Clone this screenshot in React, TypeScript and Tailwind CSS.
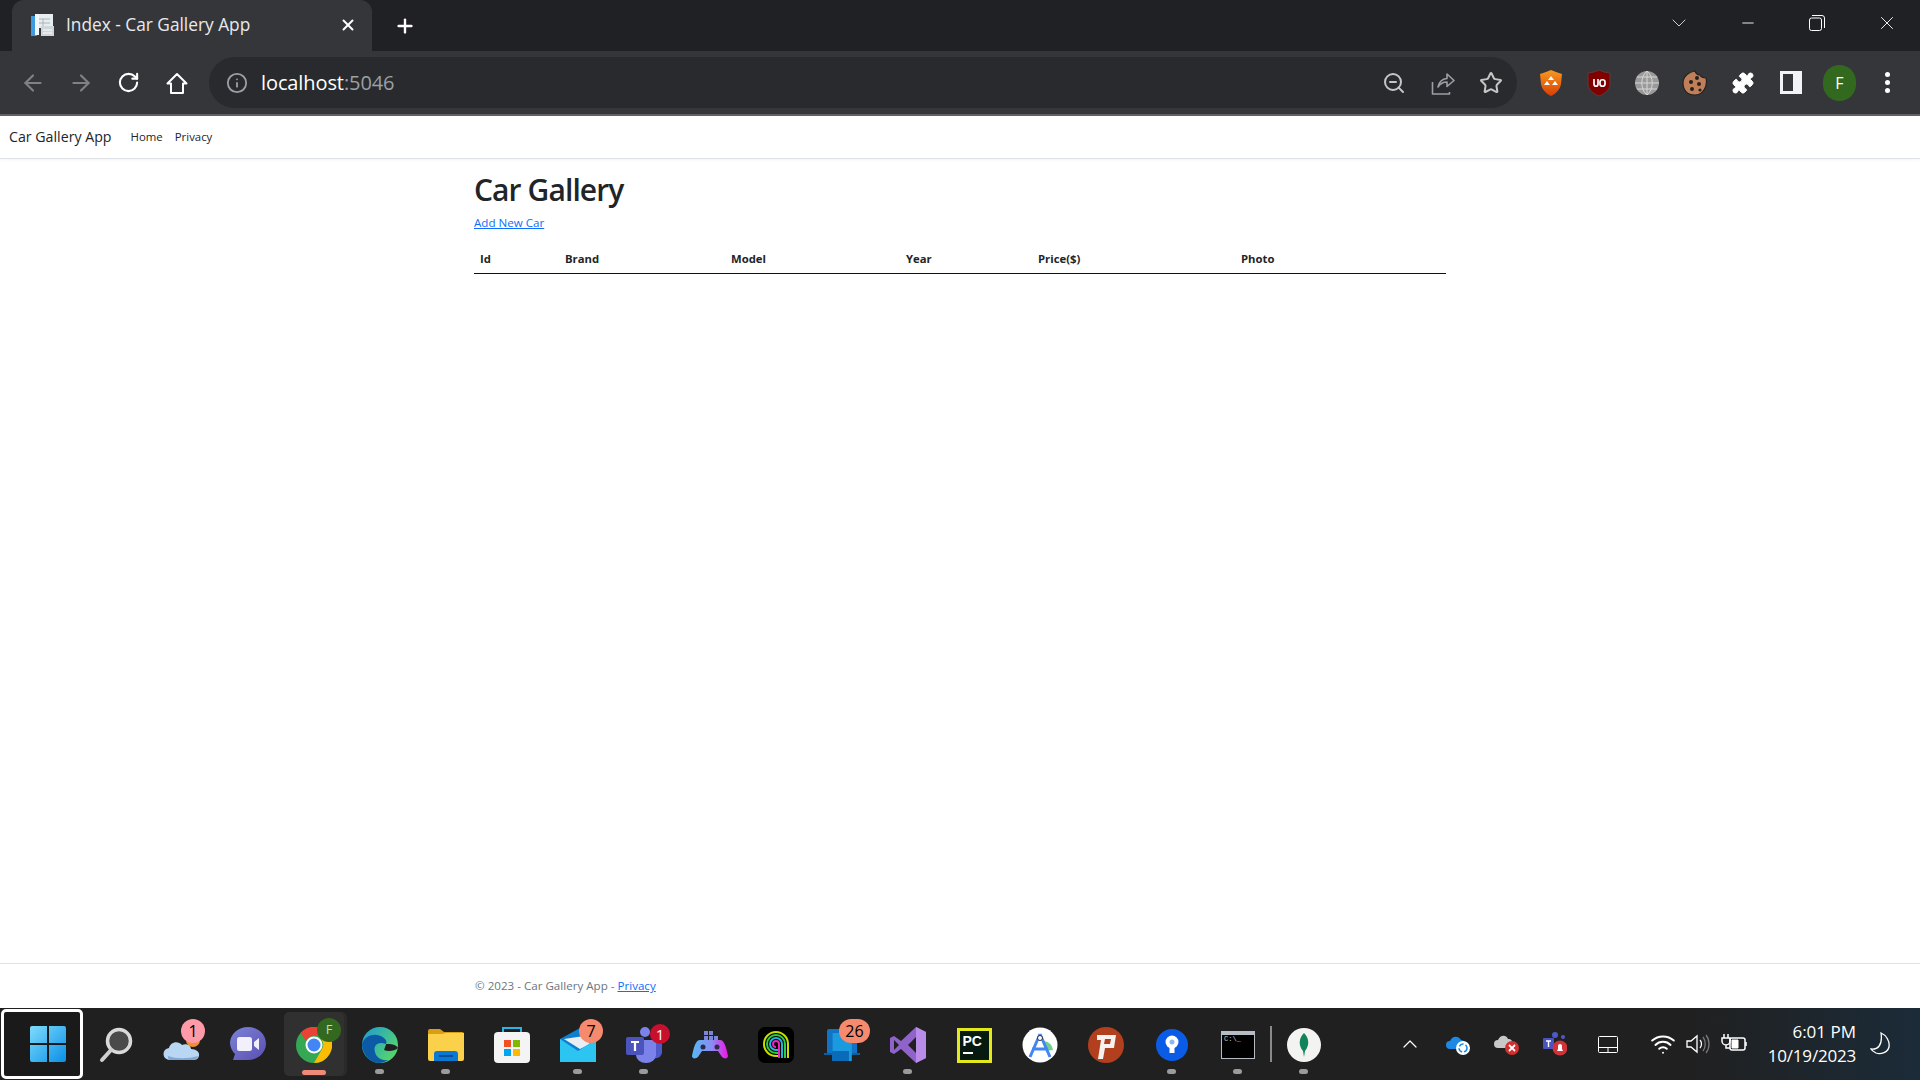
import type { ReactNode } from "react";
import { ArrowLeft, ArrowRight, Info, RotateCw, ZoomOut, Star, X, Plus, ChevronDown, ChevronUp, Minus, Puzzle, Wifi } from "lucide-react";

const columns = [
  { label: "Id", width: "w-[85px]" },
  { label: "Brand", width: "w-[166px]" },
  { label: "Model", width: "w-[175px]" },
  { label: "Year", width: "w-[132px]" },
  { label: "Price($)", width: "w-[203px]" },
  { label: "Photo", width: "flex-1" },
];

const Badge = ({ text, color, className }: { text: string; color: string; className: string }) => (
  <span className={`absolute flex h-[24px] items-center justify-center rounded-full text-[16px] text-black ${color} ${className}`}>
    {text}
  </span>
);

const Slot = ({ children, dot, badge }: { children: ReactNode; dot?: boolean; badge?: ReactNode }) => (
  <div className="relative flex h-[72px] w-[66px] shrink-0 items-center justify-center pt-[2px]">
    {children}
    {badge}
    {dot && <span className="absolute bottom-[6px] left-[28px] h-[5px] w-[9px] rounded-full bg-[#9b9b9b]" />}
  </div>
);

const TabFavicon = () => (
  <svg width="24" height="24" viewBox="0 0 24 24">
    <path d="M1 3h6v20H1z" fill="#3d9be0" />
    <path d="M6 1h17v14H6z" fill="#e8edf2" />
    <path d="M9 6h11M9 10h11M13 6v10" stroke="#aab4bd" fill="none" />
    <path d="M5 1h4v21H5z" fill="#f4f7fa" />
    <path d="M11 13h13v10H11z" fill="#cfd6dc" />
    <path d="M13 17h9M13 20h9" stroke="#fff" />
  </svg>
);

const HomeOutline = () => (
  <svg width="24" height="24" viewBox="0 0 24 24" fill="none" stroke="#fff" strokeWidth="2" strokeLinejoin="round">
    <path d="M12 3L2.500 12.500H6V22h12v-9.500h3.500z" />
  </svg>
);

const ShareBox = () => (
  <svg width="24" height="24" viewBox="0 0 24 24" fill="none" stroke="#9aa0a6" strokeWidth="1.6" strokeLinejoin="round">
    <path d="M1.500 11v12h17v-2M1.500 23" />
    <path d="M7 16c1-5 4-8 9-8.500V3l7 6.500-7 6V11c-4 0-7 2-9 5z" />
  </svg>
);

const BraveIcon = () => (
  <svg width="24" height="28" viewBox="0 0 24 28">
    <defs>
      <linearGradient id="brave" x1="0" y1="0" x2="0" y2="1">
        <stop offset="0" stopColor="#f79a1f" />
        <stop offset="1" stopColor="#d93d05" />
      </linearGradient>
    </defs>
    <path d="M12 1l5 2 6 2-1 10c-1 6-6 10-10 12C8 25 3 21 2 15L1 5l6-2z" fill="url(#brave)" />
    <path d="M12 7l3 4h-6zM8 12l3 4H5zM16 12l3 4h-6z" fill="#fff" />
  </svg>
);

const UblockIcon = () => (
  <svg width="24" height="28" viewBox="0 0 24 28">
    <path d="M12 1l5 2 6 1v11c0 6-6 10-11 12C7 25 1 21 1 15V4l6-1z" fill="#800000" stroke="#5c3a3a" />
    <path d="M7 10v5c0 3 4 3 4 0v-5M13 13c0-3 5-3 5 0v2c0 3-5 3-5 0z" fill="none" stroke="#fff" strokeWidth="1.7" />
  </svg>
);

const GlobeIcon = () => (
  <svg width="26" height="26" viewBox="0 0 26 26">
    <circle cx="13" cy="13" r="12" fill="#9a9a9a" />
    <path d="M1 13h24M3 7h20M3 19h20M13 1v24M13 1c-7 6-7 18 0 24M13 1c7 6 7 18 0 24" fill="none" stroke="#d6d6d6" />
  </svg>
);

const CookieIcon = () => (
  <svg width="26" height="28" viewBox="0 0 26 28">
    <path d="M13 2c1 3 3 4 5 4 1 2 3 3 6 3 2 8-3 17-11 17S1 21 1 14 7 3 13 2z" fill="#c17f59" stroke="#222" strokeWidth="1.2" />
    <circle cx="15" cy="9" r="2" fill="#222" />
    <circle cx="9" cy="13" r="2" fill="#222" />
    <circle cx="17" cy="15" r="2" fill="#222" />
    <circle cx="10" cy="20" r="2" fill="#222" />
    <circle cx="18" cy="21" r="1.6" fill="#222" />
  </svg>
);

const WinLogo = () => (
  <svg width="36" height="36" viewBox="0 0 36 36">
    <defs>
      <linearGradient id="win" x1="0" y1="0" x2="1" y2="1">
        <stop offset="0" stopColor="#7fdcfb" />
        <stop offset="1" stopColor="#0a8fe8" />
      </linearGradient>
    </defs>
    <path d="M0 2a2 2 0 012-2h15v17H0zM19 0h15a2 2 0 012 2v15H19zM0 19h17v17H2a2 2 0 01-2-2zM19 19h17v15a2 2 0 01-2 2H19z" fill="url(#win)" />
  </svg>
);

const SearchGlass = () => (
  <svg width="34" height="36" viewBox="0 0 34 36">
    <circle cx="20" cy="14" r="11.500" fill="#4a4a4a" stroke="#d9d9d9" strokeWidth="3.500" />
    <path d="M12 23L3 33" stroke="#cfcfcf" strokeWidth="4" strokeLinecap="round" />
  </svg>
);

const WeatherIcon = () => (
  <svg width="38" height="34" viewBox="0 0 38 34">
    <circle cx="30" cy="12" r="7" fill="#f09030" />
    <path d="M7 32a6 6 0 01-1-12c1-6 9-8 13-3 5-2 9 1 9 4 5 0 9 3 8 7-1 3-3 4-6 4z" fill="#b9d6f2" />
    <path d="M5 28c8 3 20 3 30 0-1 3-3 4-6 4H7c-1 0-2-1-2-4z" fill="#7fa8d6" />
  </svg>
);

const MeetIcon = () => (
  <svg width="36" height="36" viewBox="0 0 36 36">
    <defs>
      <linearGradient id="meet" x1="0" y1="0" x2="1" y2="1">
        <stop offset="0" stopColor="#7b83d9" />
        <stop offset="1" stopColor="#5b4fb0" />
      </linearGradient>
    </defs>
    <path d="M18 0a18 16.500 0 110 33H3l2-6A17 17 0 010 16 18 16 0 0118 0z" fill="url(#meet)" />
    <rect x="7" y="10" width="15" height="14" rx="2.500" fill="#f2f0fb" />
    <path d="M24 15l5-4v12l-5-4z" fill="#f2f0fb" />
  </svg>
);

const ChromeIcon = () => (
  <svg width="36" height="36" viewBox="0 0 36 36">
    <circle cx="18" cy="18" r="18" fill="#34a853" />
    <path d="M18 0a18 18 0 0115.600 9H18a9 9 0 00-8 5L4.500 6A18 18 0 0118 0z" fill="#ea4335" />
    <path d="M33.600 9A18 18 0 0118 36l7.800-13.500A9 9 0 0026 13z" fill="#fbbc04" />
    <circle cx="18" cy="18" r="8.500" fill="#fff" />
    <circle cx="18" cy="18" r="6.500" fill="#4285f4" />
  </svg>
);

const EdgeIcon = () => (
  <svg width="36" height="36" viewBox="0 0 36 36">
    <defs>
      <linearGradient id="edge" x1="0" y1="0" x2="1" y2="0.7">
        <stop offset="0" stopColor="#1a9bd7" />
        <stop offset="1" stopColor="#58d66a" />
      </linearGradient>
    </defs>
    <circle cx="18" cy="18" r="18" fill="url(#edge)" />
    <path d="M0 18C1 11 8 7 15 8c6 1 11 5 9 9-8-3-13 1-11 8 1 5 6 9 13 8-3 2-6 3-9 3C8 36 1 28 0 18z" fill="#0c5aa6" />
    <path d="M36 21c-3 3-10 4-14 2 1-3 2-5 2-6 4 0 10 0 12 4z" fill="#202020" />
  </svg>
);

const FolderIcon = () => (
  <svg width="36" height="32" viewBox="0 0 36 32">
    <path d="M0 2a2 2 0 012-2h10l4 3h18a2 2 0 012 2v3H0z" fill="#d99e12" />
    <path d="M0 5h14l4-1h18v26a2 2 0 01-2 2H2a2 2 0 01-2-2z" fill="#fbd14b" />
    <path d="M6 32v-7a3 3 0 013-3h18a3 3 0 013 3v7z" fill="#0c78d6" />
    <path d="M11 27h14" stroke="#0a4f94" strokeWidth="2" />
  </svg>
);

const StoreIcon = () => (
  <svg width="36" height="36" viewBox="0 0 36 36">
    <path d="M9 6V1h18v5" fill="none" stroke="#2cb3ea" strokeWidth="2" />
    <rect y="5" width="36" height="31" rx="4" fill="#f4f4f4" />
    <path d="M10 13h7v7h-7z" fill="#f25022" />
    <path d="M19 13h7v7h-7z" fill="#7fba00" />
    <path d="M10 22h7v7h-7z" fill="#00a4ef" />
    <path d="M19 22h7v7h-7z" fill="#ffb900" />
  </svg>
);

const MailIcon = () => (
  <svg width="36" height="34" viewBox="0 0 36 34">
    <path d="M0 11L20 0l16 11v23H0z" fill="#0c7fd0" />
    <path d="M4 11l20-3 6 8-10 5z" fill="#e8eef2" />
    <path d="M0 11l18 12 18-12v23H0z" fill="#2cc4f0" />
  </svg>
);

const TeamsIcon = () => (
  <svg width="36" height="36" viewBox="0 0 36 36">
    <circle cx="19" cy="5" r="5" fill="#7b83eb" />
    <circle cx="31" cy="9" r="4" fill="#5059c9" />
    <path d="M24 14h12v12a7 7 0 01-12 3z" fill="#5059c9" />
    <path d="M10 13h20v15a10 8 0 01-20 0z" fill="#7b83eb" />
    <rect y="10" width="18" height="18" rx="2" fill="#4b53bc" />
    <path d="M5 15h8M9 15v9" stroke="#fff" strokeWidth="2.200" />
  </svg>
);

const GameIcon = () => (
  <svg width="36" height="28" viewBox="0 0 36 28">
    <defs>
      <linearGradient id="pad" x1="0" y1="0" x2="1" y2="0">
        <stop offset="0" stopColor="#56b8f5" />
        <stop offset="0.55" stopColor="#8a8cf2" />
        <stop offset="1" stopColor="#f214e8" />
      </linearGradient>
    </defs>
    <path d="M8 9h20c4 0 6 6 8 16 0 3-4 3-6 1l-4-6H10l-4 6c-2 2-6 2-6-1C2 15 4 9 8 9z" fill="url(#pad)" />
    <path d="M12 0h4v4h-4zM17 0h4v4h-4zM12 5h4v4h-4zM17 5h4v4h-4zM22 5h4v4h-4z" fill="#7a86d8" />
    <circle cx="11" cy="16" r="2.500" fill="#2b2b4a" />
    <circle cx="25" cy="16" r="2.500" fill="#2b2b4a" />
  </svg>
);

const AnacondaIcon = () => (
  <svg width="36" height="36" viewBox="0 0 36 36">
    <rect width="36" height="36" rx="7" fill="#000" />
    <path d="M30 31V17a12 12 0 10-12 12h4" fill="none" stroke="#c8e000" strokeWidth="2" />
    <path d="M27 31V17a9 9 0 10-9 9h4" fill="none" stroke="#2ecc40" strokeWidth="2" />
    <path d="M24 31V17a6 6 0 10-6 6h2" fill="none" stroke="#1cb5e0" strokeWidth="2" />
    <path d="M21 31V17a3 3 0 10-3 3" fill="none" stroke="#f020c0" strokeWidth="2" />
  </svg>
);

const PhoneLinkIcon = () => (
  <svg width="36" height="32" viewBox="0 0 36 32">
    <path d="M3 2a2 2 0 012-2h26a2 2 0 012 2v22H3z" fill="#1173c4" />
    <path d="M0 24h36v2H0z" fill="#0d5ea3" />
    <path d="M7 4h24v28H7z" fill="#1a9be0" transform="translate(3 0) scale(.8 1)" />
    <path d="M8 22h17v10H8z" fill="#0a6cb8" />
  </svg>
);

const VisualStudioIcon = () => (
  <svg width="36" height="36" viewBox="0 0 36 36">
    <path d="M26 0l10 5v26l-10 5-15-14-7 5-4-2V11l4-2 7 5zM26 10l-8 8 8 8z" fill="#8f63c9" fillRule="evenodd" />
    <path d="M26 0l10 5v26l-10 5z" fill="#b88ce8" />
    <path d="M4 13v10l5-5z" fill="#202020" />
  </svg>
);

const PyCharmIcon = () => (
  <div className="flex h-[35px] w-[35px] flex-col border-[3px] border-[#e3e91a] bg-[#071a10] pl-[3px] pt-[2px] font-['Liberation_Sans',sans-serif] text-[14px] font-bold leading-[16px] text-white">
    PC
    <span className="mt-[3px] h-[2px] w-[10px] bg-white" />
  </div>
);

const AndroidStudioIcon = () => (
  <svg width="36" height="36" viewBox="0 0 36 36">
    <circle cx="18" cy="18" r="17.500" fill="#fff" />
    <path d="M20 14c6 0 10 3 11 9l-7 1z" fill="#6fd08c" />
    <path d="M18 7L8 30M18 7l10 23M10 22h16" stroke="#4285f4" strokeWidth="3" fill="none" />
    <circle cx="18" cy="11" r="2.500" fill="#fff" stroke="#333" />
  </svg>
);

const PsiphonIcon = () => (
  <svg width="36" height="36" viewBox="0 0 36 36">
    <circle cx="18" cy="18" r="18" fill="#b23f1e" />
    <path d="M9 8h19l-2 13H17l-2 11h-5l3-19H9z" fill="#f5f2f0" />
    <path d="M17 12h6l-1 5h-6z" fill="#b23f1e" />
  </svg>
);

const BlueKeyIcon = () => (
  <svg width="32" height="32" viewBox="0 0 32 32">
    <circle cx="16" cy="16" r="16" fill="#0a5ce6" />
    <circle cx="16" cy="13" r="6.500" fill="#fff" />
    <path d="M13.500 16h5v8h-5z" fill="#fff" />
    <circle cx="16" cy="13" r="2.500" fill="#8ab8f5" />
  </svg>
);

const ConsoleIcon = () => (
  <div className="h-[28px] w-[34px] border border-[#b5bcc4] bg-black">
    <div className="h-[3px] bg-[#b5bcc4]" />
    <div className="px-[2px] font-['Liberation_Mono',monospace] text-[7px] leading-[9px] text-[#cccccc]">C:\_</div>
  </div>
);

const MongoIcon = () => (
  <svg width="34" height="34" viewBox="0 0 34 34">
    <circle cx="17" cy="17" r="17" fill="#f3f4f1" />
    <path d="M17 5c5 5 6 12 1 18l-1 6-1-6C11 17 12 10 17 5z" fill="#13835a" />
  </svg>
);

const TrayTeams = () => (
  <svg width="24" height="24" viewBox="0 0 24 24">
    <circle cx="12" cy="3" r="3" fill="#5059c9" />
    <circle cx="20" cy="5" r="2" fill="#5059c9" />
    <rect y="6" width="11" height="11" rx="1" fill="#4b53bc" />
    <path d="M3 9h5M5.500 9v6" stroke="#fff" strokeWidth="1.400" />
    <circle cx="17" cy="16" r="7.500" fill="#d13438" />
    <path d="M14 19h6l-1-2v-3a2 2 0 00-4 0v3z" fill="#fff" />
  </svg>
);

const App = () => {
  return (
    <div className="flex h-[1080px] w-[1920px] flex-col overflow-hidden bg-white font-['Open_Sans',sans-serif] text-[#212529]">
      {/* tab strip */}
      <div className="flex h-[51px] shrink-0 items-center bg-[#202124] pl-[12px]">
        <div className="flex h-[51px] w-[360px] items-center rounded-t-[12px] bg-[#35363a] pb-[1px] pl-[18px] text-white">
          <TabFavicon />
          <span className="ml-[12px] text-[17.3px] text-[#e8eaed]">Index - Car Gallery App</span>
          <X className="ml-auto mr-[15px] h-[18px] w-[18px] text-white" strokeWidth={2.6} />
        </div>
        <Plus className="ml-[22px] h-[22px] w-[22px] text-white" strokeWidth={2.6} />
        <ChevronDown className="mb-[6px] ml-[1251px] h-[24px] w-[24px] text-[#cfd0d2]" strokeWidth={1} />
        <Minus className="mb-[6px] ml-[48px] h-[18px] w-[18px] text-white" strokeWidth={1.2} />
        <svg className="mb-[6px] ml-[52px]" width="16" height="16" viewBox="0 0 16 16" fill="none" stroke="#fff" strokeWidth="1">
          <rect x="0.5" y="3" width="12" height="12.500" rx="2" />
          <path d="M3 .5h10a2.500 2.500 0 012.500 2.500v10" />
        </svg>
        <X className="mb-[6px] ml-[51px] h-[22px] w-[22px] text-white" strokeWidth={1} />
      </div>

      {/* toolbar */}
      <div className="flex h-[65px] shrink-0 items-center border-b-2 border-[#606164] bg-[#35363a]">
        <ArrowLeft className="ml-[20px] h-[26px] w-[26px] text-[#808184]" strokeWidth={2} />
        <ArrowRight className="ml-[22px] h-[26px] w-[26px] text-[#808184]" strokeWidth={2} />
        <RotateCw className="ml-[23px] h-[23px] w-[23px] text-white" strokeWidth={2.2} />
        <div className="ml-[25px]"><HomeOutline /></div>
        <div className="ml-[20px] flex h-[51px] w-[1308px] items-center rounded-full bg-[#292a2d] pl-[17px]">
          <Info className="h-[22px] w-[22px] text-[#9aa0a6]" strokeWidth={2} />
          <span className="ml-[13px] text-[20px] tracking-[-0.1px] text-white">localhost<span className="text-[#9aa0a6]">:5046</span></span>
          <ZoomOut className="ml-auto h-[24px] w-[24px] text-[#c4c7c5]" strokeWidth={2} />
          <div className="ml-[25px]"><ShareBox /></div>
          <Star className="ml-[24px] mr-[14px] h-[24px] w-[24px] text-[#c4c7c5]" strokeWidth={2} />
        </div>
        <div className="ml-[22px]"><BraveIcon /></div>
        <div className="ml-[24px]"><UblockIcon /></div>
        <div className="ml-[23px]"><GlobeIcon /></div>
        <div className="ml-[22px]"><CookieIcon /></div>
        <Puzzle className="ml-[23px] h-[24px] w-[24px] fill-white text-white" strokeWidth={1} />
        <div className="ml-[25px] flex h-[23px] w-[22px] justify-end bg-[#f1f3f4] py-[3px] pl-[3px] pr-[9px]">
          <div className="h-full w-[10px] bg-[#35363a]" />
        </div>
        <div className="ml-[21px] flex h-[36px] w-[33px] items-center justify-center rounded-full bg-[#33691e] text-[16px] text-white">F</div>
        <div className="ml-[29px] flex flex-col gap-[3px]">
          <span className="h-[5px] w-[5px] rounded-full bg-white" />
          <span className="h-[5px] w-[5px] rounded-full bg-white" />
          <span className="h-[5px] w-[5px] rounded-full bg-white" />
        </div>
      </div>

      {/* navbar */}
      <nav className="flex h-[43px] shrink-0 items-center border-b border-[#dee2e6] pl-[9px] shadow-[0_1px_3px_rgba(0,0,0,0.05)]">
        <span className="text-[14.2px]">Car Gallery App</span>
        <span className="ml-[19px] text-[11.4px]">Home</span>
        <span className="ml-[12px] text-[11.4px]">Privacy</span>
      </nav>

      {/* main */}
      <main className="ml-[474px] w-[972px] flex-1">
        <h1 className="mt-[12px] text-[30px] font-semibold leading-[37px] tracking-[-0.9px]">Car Gallery</h1>
        <a className="mt-[7px] block text-[11.6px] leading-[16px] text-[#0d6efd] underline">Add New Car</a>
        <div className="mt-[14px] flex h-[29px] items-center border-b border-[#111111] pl-[6px] text-[11.3px] font-bold">
          {columns.map((col) => (
            <span key={col.label} className={col.width}>{col.label}</span>
          ))}
        </div>
      </main>

      {/* footer */}
      <footer className="flex h-[45px] shrink-0 items-center border-t border-[#dee2e6] pl-[475px] text-[11.6px] text-[#6c757d]">
        © 2023 - Car Gallery App -&nbsp;<a className="text-[#0d6efd] underline">Privacy</a>
      </footer>

      {/* taskbar */}
      <div className="flex h-[72px] shrink-0 items-center bg-[linear-gradient(90deg,#202020_0%,#202020_88%,#1b2b38_100%)] text-white">
        <div className="ml-[1px] flex h-[70px] w-[82px] items-center justify-center rounded-[5px] border-[3px] border-white bg-[#1a1a1a] pl-[12px]">
          <WinLogo />
        </div>
        <Slot><SearchGlass /></Slot>
        <Slot badge={<Badge text="1" color="bg-[#ff9aa8]" className="left-[32px] top-[11px] w-[24px]" />}><WeatherIcon /></Slot>
        <Slot><MeetIcon /></Slot>
        <div className="relative mx-[3px] flex h-[64px] w-[60px] shrink-0 items-center justify-center rounded-[5px] bg-[#303030] pt-[2px] shadow-[3px_0_0_#2a2a2a]">
          <ChromeIcon />
          <span className="absolute right-[3px] top-[6px] flex h-[24px] w-[24px] items-center justify-center rounded-full bg-[#33691e] text-[13px] text-[#d0d0d0]">F</span>
          <span className="absolute bottom-[1px] left-[18px] h-[5px] w-[24px] rounded-full bg-[#f08a78]" />
        </div>
        <Slot dot><EdgeIcon /></Slot>
        <Slot dot><FolderIcon /></Slot>
        <Slot><StoreIcon /></Slot>
        <Slot dot badge={<Badge text="7" color="bg-[#f58a6e]" className="left-[34px] top-[11px] w-[24px]" />}><MailIcon /></Slot>
        <Slot dot badge={<span className="absolute left-[39px] top-[16px] flex h-[20px] w-[20px] items-center justify-center rounded-full bg-[#c8102e] text-[15px] text-white">1</span>}><TeamsIcon /></Slot>
        <Slot><GameIcon /></Slot>
        <Slot><AnacondaIcon /></Slot>
        <Slot badge={<Badge text="26" color="bg-[#f58a6e]" className="left-[30px] top-[11px] w-[31px]" />}><PhoneLinkIcon /></Slot>
        <Slot dot><VisualStudioIcon /></Slot>
        <Slot><PyCharmIcon /></Slot>
        <Slot><AndroidStudioIcon /></Slot>
        <Slot><PsiphonIcon /></Slot>
        <Slot dot><BlueKeyIcon /></Slot>
        <Slot dot><ConsoleIcon /></Slot>
        <span className="-mx-[1px] h-[36px] w-[2px] shrink-0 bg-[#8a8a8a]" />
        <Slot dot><MongoIcon /></Slot>

        {/* tray */}
        <ChevronUp className="ml-[61px] h-[24px] w-[24px] text-white" strokeWidth={1.2} />
        <svg className="ml-[23px]" width="26" height="24" viewBox="0 0 26 24">
          <path d="M5 17a4 4 0 010-8c2-5 8-6 11-1 2 0 4 1 4 4v5z" fill="#1e88e5" />
          <circle cx="18" cy="16" r="7" fill="#fff" />
          <circle cx="18" cy="16" r="4" fill="none" stroke="#1e88e5" strokeWidth="1.5" strokeDasharray="5 2" />
        </svg>
        <svg className="ml-[23px]" width="26" height="24" viewBox="0 0 26 24">
          <path d="M4 16a4 4 0 010-8c2-5 8-6 10-1 3 0 5 2 5 5l-3 4z" fill="#c8c8c8" />
          <circle cx="18" cy="16" r="7" fill="#d32f2f" />
          <path d="M15 13l6 6M21 13l-6 6" stroke="#fff" strokeWidth="1.8" />
        </svg>
        <div className="ml-[23px]"><TrayTeams /></div>
        <svg className="ml-[31px]" width="20" height="17" viewBox="0 0 20 17" fill="none" stroke="#fff" strokeWidth="1">
          <rect x="0.5" y="0.5" width="19" height="16" rx="1" />
          <path d="M.5 11.500h19M10 11.500v5" />
        </svg>
        <Wifi className="ml-[32px] h-[26px] w-[26px] text-white" strokeWidth={1.8} />
        <svg className="ml-[9px]" width="26" height="24" viewBox="0 0 26 24" fill="none" stroke="#fff" strokeWidth="1.3">
          <path d="M2 9h4l6-5v16l-6-5H2z" />
          <path d="M15 8c2 2 2 6 0 8" />
          <path d="M18 5c3 4 3 10 0 14M21 3c4 5 4 13 0 18" stroke="#777" />
        </svg>
        <svg className="ml-[10px]" width="26" height="22" viewBox="0 0 26 22" fill="none" stroke="#fff">
          <path d="M3 1v4M7 1v4M1 5h8v3a4 4 0 01-8 0zM5 12v3h4" strokeWidth="1.5" />
          <rect x="9" y="5" width="15" height="12" rx="2" strokeWidth="1.5" />
          <path d="M11 7h6v8h-6z" fill="#fff" />
          <path d="M25 9v4" strokeWidth="1.5" />
        </svg>
        <div className="ml-[9px] w-[100px] text-right text-[17px] leading-[24px] text-white">
          <div>6:01 PM</div>
          <div className="tracking-[-0.2px]">10/19/2023</div>
        </div>
        <svg className="ml-[14px]" width="22" height="24" viewBox="0 0 22 24" fill="none" stroke="#fff" strokeWidth="1.3">
          <path d="M11 1c5 2 9 8 8 14-1 5-8 8-13 6-2-1-4-2-5-4 6 1 12-3 10-16z" />
        </svg>
      </div>
    </div>
  );
};

export default App;
